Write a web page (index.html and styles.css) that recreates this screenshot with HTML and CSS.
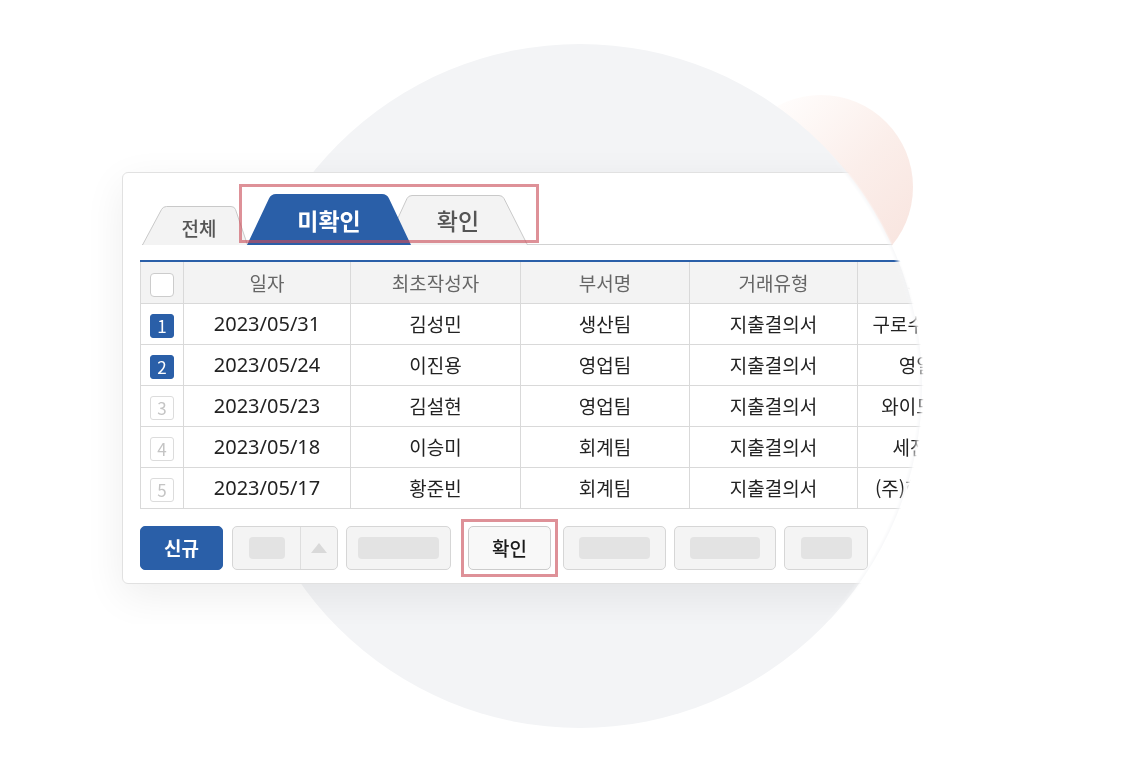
FILE: index.html
```html
<!DOCTYPE html>
<html lang="ko">
<head>
<meta charset="utf-8">
<title>미확인 목록</title>
<link rel="stylesheet" href="styles.css">
</head>
<body>
<div class="stage">
  <div class="bg-pink"></div>
  <div class="bg-gray"></div>
  <div class="clip">
    <div class="panel">
      <div class="tabs">
        <div class="tab tab-all">
          <svg class="tab-shape" width="106" height="39" viewBox="0 0 106 39"><path d="M0.5 39 L19.5 3.5 Q21 0.5 24.5 0.5 L89 0.5 Q92.5 0.5 93.5 3.5 L105.5 39" fill="#f3f3f3" stroke="#c9c9c9" stroke-width="1"/></svg>
          <span class="tab-label">전체</span>
        </div>
        <div class="tab tab-active">
          <svg class="tab-shape" width="164" height="51" viewBox="0 0 164 51"><path d="M0 51 L22 4.5 Q24 0 29 0 L135 0 Q140 0 142 4.5 L164 51 Z" fill="#2a5fa8"/></svg>
          <span class="tab-label">미확인</span>
        </div>
        <div class="tab tab-done">
          <svg class="tab-shape" width="143" height="50" viewBox="0 0 143 50"><path d="M0.5 50 L22 3.5 Q23.5 0.5 27 0.5 L114 0.5 Q117.5 0.5 119 3.5 L142.5 50" fill="#f3f3f3" stroke="#c9c9c9" stroke-width="1"/></svg>
          <span class="tab-label">확인</span>
        </div>
        <div class="hl hl-tabs"></div>
      </div>

      <table class="grid">
        <colgroup>
          <col class="c-chk"><col class="c-date"><col class="c-name"><col class="c-dept"><col class="c-type"><col class="c-client">
        </colgroup>
        <thead>
          <tr>
            <th><span class="chk"></span></th>
            <th>일자</th>
            <th>최초작성자</th>
            <th>부서명</th>
            <th>거래유형</th>
            <th>거래처명</th>
          </tr>
        </thead>
        <tbody>
          <tr>
            <td><span class="num num-on">1</span></td>
            <td class="date">2023/05/31</td><td>김성민</td><td>생산팀</td><td>지출결의서</td><td>구로수산유통상사</td>
          </tr>
          <tr>
            <td><span class="num num-on">2</span></td>
            <td class="date">2023/05/24</td><td>이진용</td><td>영업팀</td><td>지출결의서</td><td>영일산업사</td>
          </tr>
          <tr>
            <td><span class="num">3</span></td>
            <td class="date">2023/05/23</td><td>김설현</td><td>영업팀</td><td>지출결의서</td><td>와이드정보통신</td>
          </tr>
          <tr>
            <td><span class="num">4</span></td>
            <td class="date">2023/05/18</td><td>이승미</td><td>회계팀</td><td>지출결의서</td><td>세진상사(주)</td>
          </tr>
          <tr>
            <td><span class="num">5</span></td>
            <td class="date">2023/05/17</td><td>황준빈</td><td>회계팀</td><td>지출결의서</td><td>(주)한국정밀공업</td>
          </tr>
        </tbody>
      </table>

      <div class="actions">
        <button class="btn btn-primary">신규</button>
        <div class="btn btn-split">
          <span class="split-main"><span class="ph ph-sm"></span></span>
          <span class="split-arrow"><span class="tri"></span></span>
        </div>
        <button class="btn btn-w105"><span class="ph ph-81"></span></button>
        <div class="hl hl-btn">
          <button class="btn btn-confirm">확인</button>
        </div>
        <button class="btn btn-w103"><span class="ph ph-71"></span></button>
        <button class="btn btn-w102"><span class="ph ph-70"></span></button>
        <button class="btn btn-w84"><span class="ph ph-51"></span></button>
      </div>
    </div>
  </div>
</div>
</body>
</html>
```

FILE: styles.css
```css
* { box-sizing: border-box; }

html, body {
  margin: 0;
  padding: 0;
  background: #ffffff;
}

body {
  width: 1126px;
  height: 774px;
  overflow: hidden;
  font-family: "Noto Sans CJK KR", "Noto Sans", sans-serif;
  color: #222;
}

.stage {
  position: relative;
  width: 1126px;
  height: 774px;
  padding: 132px 0 0 82px;
}

/* decorative background circles */
.bg-pink {
  position: absolute;
  left: 729px;
  top: 95px;
  width: 184px;
  height: 184px;
  border-radius: 50%;
  background: linear-gradient(135deg, #fffdfc 15%, #fbeeea 55%, #f8e2dc 100%);
  z-index: 0;
}

.bg-gray {
  position: absolute;
  left: 238px;
  top: 44px;
  width: 684px;
  height: 684px;
  border-radius: 50%;
  background: #f3f4f6;
  z-index: 0;
}

/* the panel is cut off by the big circle on its right */
.clip {
  position: relative;
  z-index: 1;
  width: 1020px;
  padding: 40px;
  -webkit-mask-image: linear-gradient(#000, #000), radial-gradient(circle 344px at 498px 254px, #000 338px, transparent 344px);
  -webkit-mask-size: 498px 100%, 100% 100%;
  -webkit-mask-repeat: no-repeat, no-repeat;
  -webkit-mask-position: 0 0, 0 0;
  mask-image: linear-gradient(#000, #000), radial-gradient(circle 344px at 498px 254px, #000 338px, transparent 344px);
  mask-size: 498px 100%, 100% 100%;
  mask-repeat: no-repeat, no-repeat;
  mask-position: 0 0, 0 0;
}

.panel {
  width: 940px;
  height: 412px;
  background: #ffffff;
  border: 1px solid #e1e1e1;
  border-radius: 6px;
  box-shadow: 0 12px 40px rgba(0, 0, 0, 0.07);
  padding: 20px 0 0 17px;
}

/* tabs */
.tabs {
  position: relative;
  display: flex;
  align-items: flex-end;
  height: 52px;
  margin-left: 2px;
  border-bottom: 1px solid #d2d2d2;
}

.tab {
  position: relative;
  display: flex;
  align-items: center;
  justify-content: center;
  flex: none;
}

.tab-shape {
  position: absolute;
  left: 0;
  top: 0;
  display: block;
}

.tab-label {
  position: relative;
}

.tab-all {
  width: 106px;
  height: 39px;
  margin-bottom: -1px;
  padding: 4px 0 0 8px;
  z-index: 1;
  font-size: 19px;
  font-weight: 500;
  color: #555;
}

.tab-active {
  width: 164px;
  height: 51px;
  margin-left: -1px;
  margin-bottom: -1px;
  padding-top: 1px;
  z-index: 3;
  font-size: 23px;
  font-weight: 700;
  color: #ffffff;
}

.tab-done {
  width: 143px;
  height: 50px;
  margin-left: -26px;
  margin-bottom: -1px;
  padding: 0 0 0 3px;
  z-index: 2;
  font-size: 23px;
  font-weight: 500;
  color: #555;
}

/* pink highlight frames */
.hl {
  border: 3px solid rgba(201, 78, 89, 0.62);
}

.hl-tabs {
  position: absolute;
  left: 97px;
  top: -9px;
  width: 300px;
  height: 59px;
  z-index: 5;
  pointer-events: none;
}

.hl-btn {
  padding: 4px;
  margin: 0 -3px 0 2px;
}

/* grid */
.grid {
  margin-top: 15px;
  width: 887px;
  table-layout: fixed;
  border-collapse: collapse;
  font-size: 19px;
}

.c-chk { width: 43px; }
.c-date { width: 167px; }
.c-name { width: 170px; }
.c-dept { width: 169px; }
.c-type { width: 168px; }
.c-client { width: 170px; }

.grid th,
.grid td {
  border: 1px solid #d9d9d9;
  text-align: center;
  vertical-align: middle;
  padding: 0;
  white-space: nowrap;
  overflow: hidden;
}

.grid thead th {
  border-top: 2px solid #2a5fa8;
  background: #f3f3f3;
  height: 42px;
  font-weight: 400;
  color: #666;
}

.grid tbody td {
  height: 41px;
  color: #222;
}

.grid tbody td.date {
  font-family: "Noto Sans", "Noto Sans CJK KR", sans-serif;
  font-size: 20px;
}

.chk {
  display: inline-block;
  width: 24px;
  height: 24px;
  border: 1px solid #cccccc;
  border-radius: 4px;
  background: #ffffff;
  vertical-align: middle;
}

.num {
  display: inline-flex;
  align-items: center;
  justify-content: center;
  width: 24px;
  height: 24px;
  border: 1.5px solid #dcdcdc;
  border-radius: 3px;
  font-size: 17px;
  line-height: 1;
  color: #c4c4c4;
  vertical-align: middle;
}

.num-on {
  background: #2a5fa8;
  border-color: #2a5fa8;
  color: #ffffff;
}

/* action buttons */
.actions {
  display: flex;
  align-items: center;
  gap: 8px;
  margin-top: 17px;
  height: 44px;
}

.btn {
  height: 44px;
  border: 1px solid #d6d6d6;
  border-radius: 5px;
  background: #f4f4f4;
  padding: 0;
  display: flex;
  align-items: center;
  justify-content: center;
  font-family: inherit;
  flex: none;
}

.btn-primary {
  width: 83px;
  margin-right: 1px;
  background: #2a5fa8;
  border-color: #2a5fa8;
  color: #ffffff;
  font-size: 19px;
  font-weight: 700;
}

.btn-split {
  width: 106px;
  align-items: stretch;
}

.split-main {
  width: 68px;
  display: flex;
  align-items: center;
  justify-content: center;
  border-right: 1px solid #dedede;
}

.split-arrow {
  flex: 1;
  display: flex;
  align-items: center;
  justify-content: center;
}

.tri {
  width: 0;
  height: 0;
  border-left: 8px solid transparent;
  border-right: 8px solid transparent;
  border-bottom: 10px solid #d9d9d9;
}

.btn-w105 { width: 105px; }
.btn-w103 { width: 103px; }
.btn-w102 { width: 102px; }
.btn-w84 { width: 84px; }

.btn-confirm {
  width: 83px;
  background: #f8f8f8;
  border-color: #cccccc;
  color: #1a1a1a;
  font-size: 19px;
  font-weight: 500;
}

.ph {
  display: block;
  height: 22px;
  border-radius: 4px;
  background: #e3e3e3;
}

.ph-sm { width: 36px; }
.ph-81 { width: 81px; }
.ph-71 { width: 71px; }
.ph-70 { width: 70px; }
.ph-51 { width: 51px; }
```
